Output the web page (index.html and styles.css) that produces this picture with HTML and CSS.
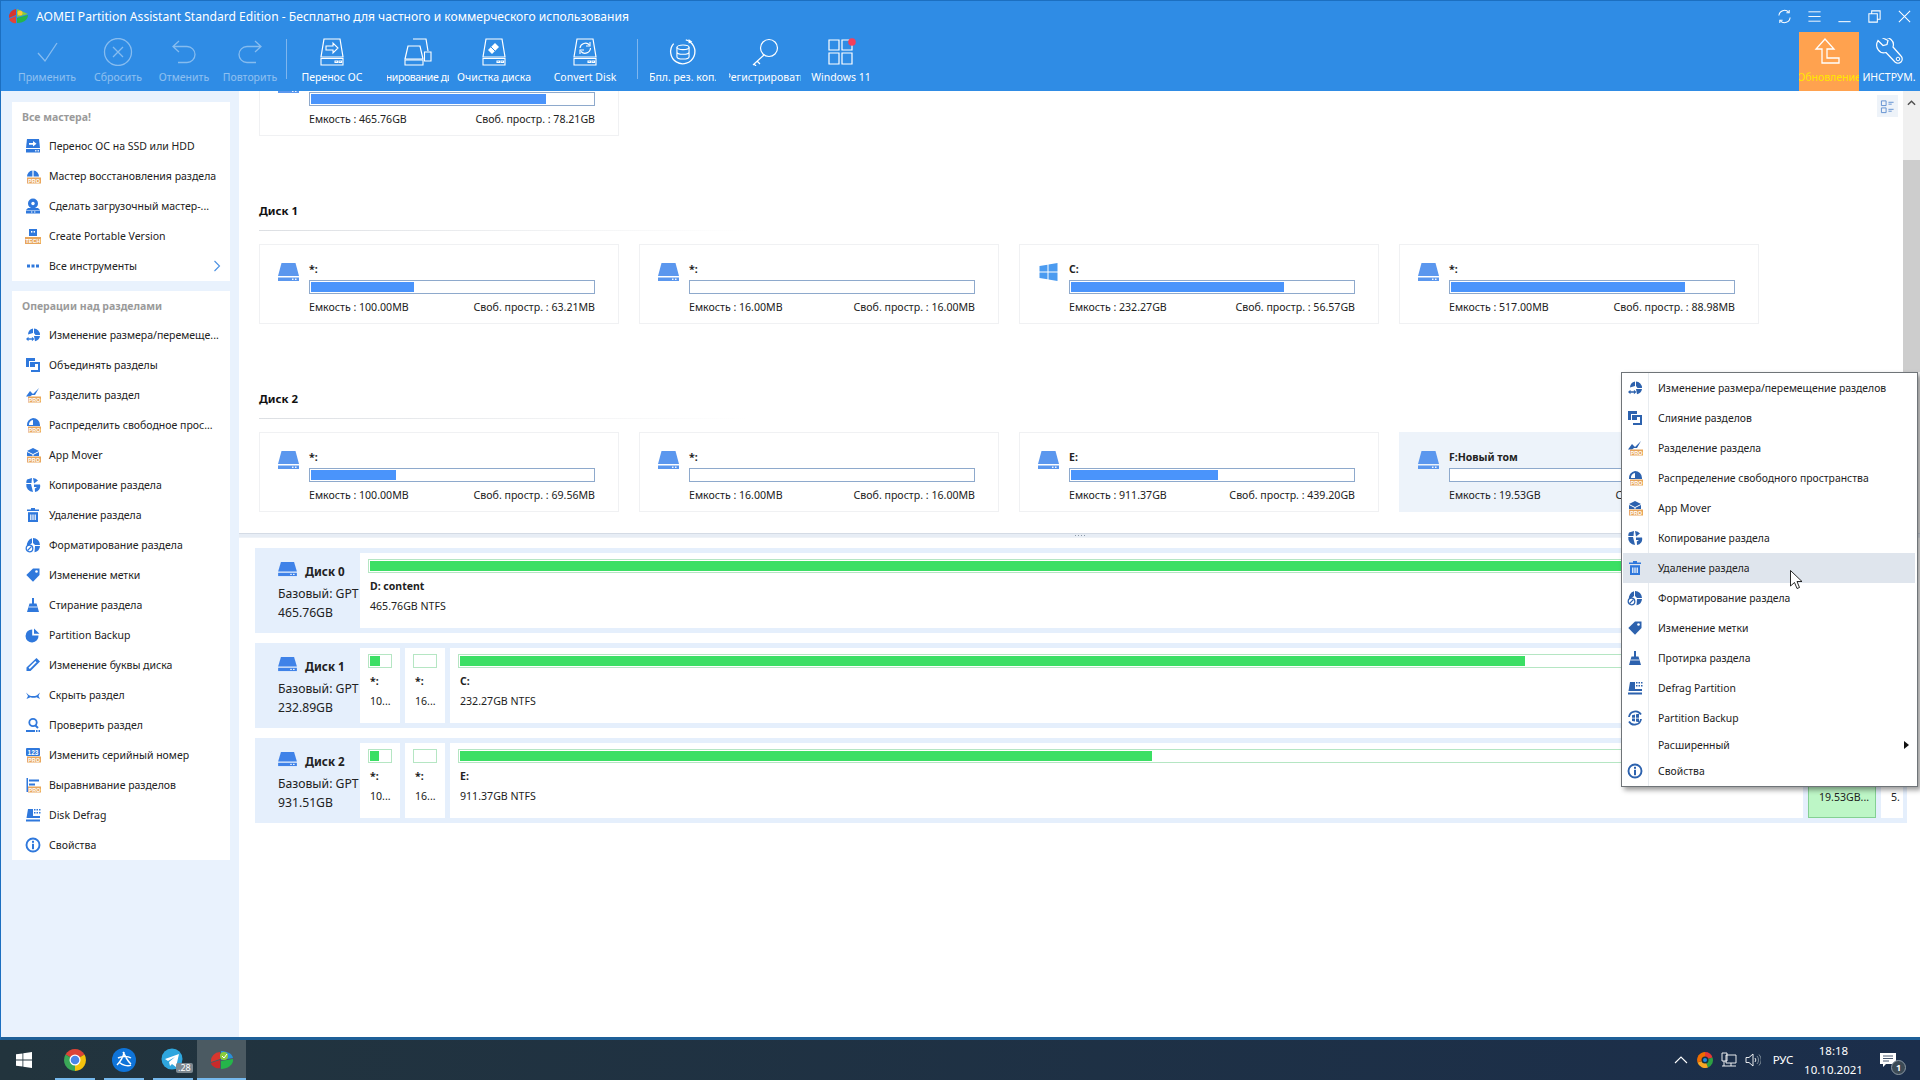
FILE: index.html
```html
<!DOCTYPE html>
<html lang="ru">
<head>
<meta charset="utf-8">
<title>AOMEI Partition Assistant</title>
<link rel="stylesheet" href="styles.css">
</head>
<body>
<svg class="sprite" xmlns="http://www.w3.org/2000/svg">
  <symbol id="drive" viewBox="0 0 21 18"><path d="M3.5 0H17.5L21 13H0Z" fill="#5b97ee"/><rect y="14.5" width="21" height="3.5" fill="#5b97ee"/><rect x="14" y="15.6" width="1.5" height="1.3" fill="#fff"/><rect x="17" y="15.6" width="1.5" height="1.3" fill="#fff"/></symbol>
  <symbol id="drive2" viewBox="0 0 20 16"><path d="M3 0H17L20 10H0Z" fill="#3f82e8"/><rect y="11.5" width="20" height="3.5" fill="#3f82e8"/><rect x="13" y="12.6" width="1.5" height="1.3" fill="#fff"/><rect x="16" y="12.6" width="1.5" height="1.3" fill="#fff"/></symbol>
  <symbol id="win" viewBox="0 0 18 18"><path d="M0 3L8 1.7V8.4H0ZM9 1.5L18 0V8.4H9ZM0 9.6H8V16.3L0 15ZM9 9.6H18V18L9 16.5Z" fill="#4b9bf0"/></symbol>

  <symbol id="i-migrate" viewBox="0 0 16 16"><path d="M2 1H14L15 10H1Z" fill="currentColor"/><path d="M4 5h4V3l3.500 2.800L8 8.600V6.800H4Z" fill="#fff"/><rect x="1" y="11" width="14" height="3.500" fill="currentColor"/><rect x="10" y="12.200" width="1.500" height="1.200" fill="#fff"/><rect x="12.500" y="12.200" width="1.500" height="1.200" fill="#fff"/></symbol>
  <symbol id="i-restore" viewBox="0 0 16 16"><path d="M2 8.500A6 6 0 0 1 7.400 2.500V8.500ZM8.600 2.500A6 6 0 0 1 14 8.500H8.600Z" fill="currentColor"/><rect x="2" y="9.500" width="14" height="6" fill="#e8a65c"/><text x="9" y="14.500" text-anchor="middle" font-family="Liberation Sans" font-size="5.500" font-weight="700" fill="#fff">PRO</text></symbol>
  <symbol id="i-boot" viewBox="0 0 16 16"><circle cx="8" cy="5.500" r="5" fill="currentColor"/><circle cx="8" cy="5.500" r="1.700" fill="#fff"/><path d="M3 10h10l2 2H1Z" fill="currentColor"/><rect x="1" y="12.500" width="14" height="3" fill="currentColor"/><rect x="6" y="13.500" width="1.400" height="1" fill="#fff"/><rect x="9" y="13.500" width="1.400" height="1" fill="#fff"/></symbol>
  <symbol id="i-tech" viewBox="0 0 16 16"><path d="M4 1h8v7H4Z" fill="currentColor"/><rect x="6" y="3" width="1.400" height="1.600" fill="#fff"/><rect x="8.600" y="3" width="1.400" height="1.600" fill="#fff"/><rect y="9" width="16" height="7" fill="#e8a65c"/><text x="8" y="14.600" text-anchor="middle" font-family="Liberation Sans" font-size="5.500" font-weight="700" fill="#fff">TECH</text></symbol>
  <symbol id="i-dots" viewBox="0 0 16 16"><path d="M2 6.500h3v3H2ZM6.500 6.500h3v3h-3ZM11 6.500h3v3h-3Z" fill="currentColor"/></symbol>
  <symbol id="i-resize" viewBox="0 0 16 16"><path d="M3 7.500A6.500 6.500 0 0 1 8 1.500V6ZM9 1.500A6.500 6.500 0 0 1 15 8H10.500L9 6ZM9 9H15A6.500 6.500 0 0 1 10 14.200Z" fill="currentColor"/><path d="M1 12l2.500-2.200v1.400h3.400V9.800L9.400 12l-2.500 2.200v-1.400H3.500v1.400Z" fill="currentColor"/></symbol>
  <symbol id="i-merge" viewBox="0 0 16 16"><path d="M1 1h9v3H4v6H1Z" fill="currentColor"/><path d="M5 5h10v10H6v-2h7V7H5Z" fill="currentColor"/><rect x="5" y="5" width="5" height="5" fill="currentColor"/></symbol>
  <symbol id="i-split" viewBox="0 0 16 16"><path d="M1 9.500L5 4l3 3 6-6-4 7H7L5 9.500Z" fill="currentColor"/><rect x="3" y="9.500" width="13" height="6" fill="#e8a65c"/><text x="9.500" y="14.500" text-anchor="middle" font-family="Liberation Sans" font-size="5.500" font-weight="700" fill="#fff">PRO</text></symbol>
  <symbol id="i-alloc" viewBox="0 0 16 16"><path d="M8 1A7 7 0 0 1 15 8V9H2A7 7 0 0 1 8 1Z" fill="currentColor"/><path d="M8 3V8H4A4.500 4.500 0 0 1 8 3Z" fill="#fff"/><rect x="3" y="9.500" width="13" height="6" fill="#e8a65c"/><text x="9.500" y="14.500" text-anchor="middle" font-family="Liberation Sans" font-size="5.500" font-weight="700" fill="#fff">PRO</text></symbol>
  <symbol id="i-app" viewBox="0 0 16 16"><path d="M8 1l6 3-6 3-6-3Z" fill="currentColor"/><path d="M2 5l5.500 2.800V9H2ZM14 5L8.500 7.800V9H14Z" fill="currentColor"/><rect x="2" y="9.500" width="14" height="6" fill="#e8a65c"/><text x="9" y="14.500" text-anchor="middle" font-family="Liberation Sans" font-size="5.500" font-weight="700" fill="#fff">PRO</text></symbol>
  <symbol id="i-copy" viewBox="0 0 16 16"><path d="M2 2.500L7 1 6.500 6H1.300A7 7 0 0 1 2 2.500ZM8 1a7 7 0 0 1 5 2.500L9 6.500ZM1.300 7H6l2 8A7 7 0 0 1 1.300 7Z" fill="currentColor"/><path d="M9 7.500h6a6 6 0 0 1-5 7.500l-.2-3.500L12 10H9Z" fill="currentColor"/></symbol>
  <symbol id="i-del" viewBox="0 0 16 16"><path d="M6 1h4v1.500h4V4H2V2.500h4Z" fill="currentColor"/><path d="M3 5.200h10V15H3Z" fill="currentColor"/><path d="M5.200 7.500h1.200V13H5.200ZM7.400 7.500h1.200V13H7.400ZM9.600 7.500h1.200V13H9.600Z" fill="#fff"/></symbol>
  <symbol id="i-format" viewBox="0 0 16 16"><path d="M8 1a7 7 0 0 1 7 7H10L8 6ZM7 1.200V6L3.500 9H2A7 7 0 0 1 7 1.200ZM10 9h5a7 7 0 0 1-5.500 6.300Z" fill="currentColor"/><circle cx="4.500" cy="11.500" r="3.300" fill="#fff" stroke="currentColor" stroke-width="1.300"/><path d="M2.500 13.500l4-4" stroke="currentColor" stroke-width="1.100"/></symbol>
  <symbol id="i-tag" viewBox="0 0 16 16"><path d="M8 1.500h6.500V8L8 14.800 1.300 8Z" fill="currentColor"/><circle cx="11.500" cy="4.500" r="1.300" fill="#fff"/></symbol>
  <symbol id="i-wipe" viewBox="0 0 16 16"><path d="M7 1h2v5.500h2.500L14 15H2l2.500-8.500H7Z" fill="currentColor"/><path d="M3.500 10h9" stroke="#fff" stroke-width=".8"/></symbol>
  <symbol id="i-backup" viewBox="0 0 16 16"><path d="M7.200 2.500V8.500H13.500A6.500 6.500 0 1 1 7.200 2.500ZM9 1.500L14.500 6.800H9Z" fill="currentColor"/></symbol>
  <symbol id="i-letter" viewBox="0 0 16 16"><path d="M11.500 1L15 4.500 5.500 14H1.500V10.500Z" fill="currentColor"/><path d="M3.500 10.700l6.800-6.800 1.300 1.300-6.800 6.800Z" fill="#fff"/></symbol>
  <symbol id="i-hide" viewBox="0 0 16 16"><path d="M1 5.500l3 2.700c2.500 1.200 5.500 1.200 8 0l3-2.700-1.500 3.500 1.500 3-3.500-1.800c-2 .7-4 .7-6 0L1.500 12 3 9Z" fill="currentColor"/></symbol>
  <symbol id="i-check" viewBox="0 0 16 16"><circle cx="8" cy="5.500" r="3.700" fill="none" stroke="currentColor" stroke-width="1.800"/><path d="M10.500 8.500l2.500 2.500" stroke="currentColor" stroke-width="2"/><rect x="1" y="13" width="9" height="2" fill="currentColor"/><rect x="11" y="13" width="1.500" height="2" fill="currentColor"/><rect x="13.500" y="13" width="1.500" height="2" fill="currentColor"/></symbol>
  <symbol id="i-serial" viewBox="0 0 16 16"><rect x="1" y="1" width="14" height="8" rx="1" fill="currentColor"/><text x="8" y="7.600" text-anchor="middle" font-family="Liberation Sans" font-size="6.500" font-weight="700" fill="#fff">123</text><rect x="2" y="9.500" width="14" height="6" fill="#e8a65c"/><text x="9" y="14.500" text-anchor="middle" font-family="Liberation Sans" font-size="5.500" font-weight="700" fill="#fff">PRO</text></symbol>
  <symbol id="i-align" viewBox="0 0 16 16"><path d="M1.500 1H3V15H1.500ZM4 2.500H14V4.500H4ZM4 6.500H10V8.500H4Z" fill="currentColor"/><rect x="3" y="9.500" width="13" height="6" fill="#e8a65c"/><text x="9.500" y="14.500" text-anchor="middle" font-family="Liberation Sans" font-size="5.500" font-weight="700" fill="#fff">PRO</text></symbol>
  <symbol id="i-defrag" viewBox="0 0 16 16"><path d="M3 2H8V9H15V11H1.500ZM1 12.500H15V14.500H1Z" fill="currentColor"/><path d="M9 2h1.500v1.500H9ZM11.500 2H13v1.500h-1.500ZM14 2h1.500v1.500H14ZM9 5h1.500v1.500H9ZM11.500 5H13v1.500h-1.500ZM14 5h1.500v1.500H14Z" fill="currentColor"/></symbol>
  <symbol id="i-info" viewBox="0 0 16 16"><circle cx="8" cy="8" r="6.500" fill="none" stroke="currentColor" stroke-width="1.900"/><rect x="7" y="3.800" width="2" height="2" fill="currentColor"/><rect x="7" y="6.800" width="2" height="5.400" fill="currentColor"/></symbol>
  <symbol id="i-backup2" viewBox="0 0 16 16"><path d="M2 7A6.500 6.500 0 0 1 14 4.500M14 9A6.500 6.500 0 0 1 2 11.500" fill="none" stroke="currentColor" stroke-width="1.800"/><path d="M5 5.200l3-.7V7.700H5ZM9 4.300l3-.6V7.700H9ZM5 8.500h3v3l-3-.6ZM9 8.500h3v3.700l-3-.6Z" fill="currentColor"/></symbol>

  <symbol id="t-check" viewBox="0 0 32 28"><path d="M7 15l7 8L26 5" fill="none" stroke="#fff" stroke-width="1.300"/></symbol>
  <symbol id="t-cancel" viewBox="0 0 32 28"><circle cx="16" cy="14" r="13.500" fill="none" stroke="#fff" stroke-width="1.300"/><path d="M11 9l10 10M21 9L11 19" fill="none" stroke="#fff" stroke-width="1.300"/></symbol>
  <symbol id="t-undo" viewBox="0 0 32 28"><path d="M11 3L5 8.500l6 5.500M5 8.500H19a7.800 7.800 0 0 1 0 16H10" fill="none" stroke="#fff" stroke-width="1.300"/></symbol>
  <symbol id="t-redo" viewBox="0 0 32 28"><path d="M21 3l6 5.500-6 5.500M27 8.500H13a7.800 7.800 0 0 0 0 16H22" fill="none" stroke="#fff" stroke-width="1.300"/></symbol>
  <symbol id="t-migrate" viewBox="0 0 32 28"><path d="M8 1H24L27 19H5Z" fill="none" stroke="#fff" stroke-width="1.200"/><path d="M5 20.500H27V27H5ZM19 23h2.500v1.500H19ZM23 23h2.500v1.500H23Z" fill="none" stroke="#fff" stroke-width="1.100"/><path d="M10 8h7V5l5 5-5 5v-3h-7Z" fill="none" stroke="#fff" stroke-width="1.100"/></symbol>
  <symbol id="t-clone" viewBox="0 0 32 28"><path d="M6 8H18L21 21H3Z" fill="none" stroke="#fff" stroke-width="1.200"/><path d="M3 22H21V27H3Z" fill="none" stroke="#fff" stroke-width="1.100"/><path d="M11 1H24L26 13" fill="none" stroke="#fff" stroke-width="1.200"/><path d="M22.500 14H29V23H22.500Z" fill="none" stroke="#fff" stroke-width="1.100"/></symbol>
  <symbol id="t-clean" viewBox="0 0 32 28"><path d="M8 1H24L27 19H5Z" fill="none" stroke="#fff" stroke-width="1.200"/><path d="M5 20.500H27V27H5ZM19 23h2.500v1.500H19ZM23 23h2.500v1.500H23Z" fill="none" stroke="#fff" stroke-width="1.100"/><path d="M17 5l4 4-7 7-4-4Z" fill="#fff"/><path d="M13 9l4 4" stroke="#2f8ce5" stroke-width="1"/></symbol>
  <symbol id="t-convert" viewBox="0 0 32 28"><path d="M8 1H24L27 19H5Z" fill="none" stroke="#fff" stroke-width="1.200"/><path d="M5 20.500H27V27H5ZM19 23h2.500v1.500H19ZM23 23h2.500v1.500H23Z" fill="none" stroke="#fff" stroke-width="1.100"/><path d="M11 10a5.500 5.500 0 0 1 9.500-3M21.500 10a5.500 5.500 0 0 1-9.500 3.500" fill="none" stroke="#fff" stroke-width="1.200"/><path d="M21 4v4h-4M11 16v-4h4" fill="none" stroke="#fff" stroke-width="1.100"/></symbol>
  <symbol id="t-backup" viewBox="0 0 32 30"><path d="M19 2A13 13 0 1 1 6 6" fill="none" stroke="#fff" stroke-width="1.400"/><path d="M22 1l4 3-4 2" fill="#fff"/><ellipse cx="16" cy="10" rx="6.500" ry="2.500" fill="none" stroke="#fff" stroke-width="1.200"/><path d="M9.500 10v10c0 3.300 13 3.300 13 0V10M9.500 15c0 3.300 13 3.300 13 0" fill="none" stroke="#fff" stroke-width="1.200"/></symbol>
  <symbol id="t-key" viewBox="0 0 32 28"><circle cx="20" cy="10" r="8.500" fill="none" stroke="#fff" stroke-width="1.200"/><path d="M15 17L4 27M8 23l3 3M5 26l2 2" fill="none" stroke="#fff" stroke-width="1.200"/></symbol>
  <symbol id="t-win" viewBox="0 0 32 28"><path d="M4 2H14V12H4ZM17 2H27V12H17ZM4 15H14V26H4ZM17 15H27V26H17Z" fill="none" stroke="#fff" stroke-width="1.200"/><circle cx="27" cy="4" r="3.800" fill="#f23f5c"/></symbol>
  <symbol id="t-update" viewBox="0 0 32 28"><path d="M12 1L3 11H9V25H26V20H14V11H21Z" fill="none" stroke="#fff" stroke-width="1.300"/></symbol>
  <symbol id="t-wrench" viewBox="0 0 32 28"><path d="M5 2.500l5 5 4-1 1-4-5-2.500c6-2 12 3 10 9L28 18a4.200 4.200 0 0 1-6 6L13 14.500C7 16.500 1 9.500 5 2.500Z" fill="none" stroke="#fff" stroke-width="1.200"/><circle cx="25" cy="21" r="1.800" fill="none" stroke="#fff" stroke-width="1"/></symbol>
</svg>

<div class="screen">
  <div class="window">
    <header class="header">
      <div class="titlebar">
        <svg class="app-logo" viewBox="0 0 22 16"><path d="M9 1A8 8 0 0 0 2 10L9 7Z" fill="#d8362e"/><path d="M2 11c1 3 5 5 7 4V8Z" fill="#e3433a"/><path d="M10 1l11 5-11 3Z" fill="#8acb3a"/><path d="M10 10l11-3c0 5-5 8-11 8Z" fill="#25b54a"/><circle cx="13" cy="5" r="2.500" fill="#ffc933"/></svg>
        <span class="title-text">AOMEI Partition Assistant Standard Edition - Бесплатно для частного и коммерческого использования</span>
        <div class="win-controls">
          <span class="ctl"><svg viewBox="0 0 16 16"><path d="M2 7a6 6 0 0 1 10.500-3.500M14 9a6 6 0 0 1-10.500 3.500" fill="none" stroke="#fff" stroke-width="1.100"/><path d="M13 1v3h-3M3 15v-3h3" fill="none" stroke="#fff" stroke-width="1.100"/></svg></span>
          <span class="ctl"><svg viewBox="0 0 16 16"><path d="M1.500 3h13M1.500 8h13M1.500 13h13" stroke="#fff" stroke-width="1"/></svg></span>
          <span class="ctl"><svg viewBox="0 0 16 16"><path d="M1.500 13.500h13" stroke="#fff" stroke-width="1.100"/></svg></span>
          <span class="ctl"><svg viewBox="0 0 16 16"><path d="M2 5h9v9H2ZM5 5V2h9v9h-3" fill="none" stroke="#fff" stroke-width="1.100"/></svg></span>
          <span class="ctl"><svg viewBox="0 0 16 16"><path d="M2 2l12 12M14 2L2 14" stroke="#fff" stroke-width="1.100"/></svg></span>
        </div>
      </div>
      <div class="toolbar">
        <div class="tool off w66 m14"><svg class="t-icon"><use href="#t-check"/></svg><span>Применить</span></div>
        <div class="tool off w66 m5"><svg class="t-icon"><use href="#t-cancel"/></svg><span>Сбросить</span></div>
        <div class="tool off w66"><svg class="t-icon"><use href="#t-undo"/></svg><span>Отменить</span></div>
        <div class="tool off w66"><svg class="t-icon"><use href="#t-redo"/></svg><span>Повторить</span></div>
        <div class="tool-sep s1"></div>
        <div class="tool w66"><svg class="t-icon"><use href="#t-migrate"/></svg><span>Перенос ОС</span></div>
        <div class="tool w62 m22 tight"><svg class="t-icon"><use href="#t-clone"/></svg><span>Клонирование диска</span></div>
        <div class="tool w78 m6"><svg class="t-icon"><use href="#t-clean"/></svg><span>Очистка диска</span></div>
        <div class="tool w66 m19"><svg class="t-icon"><use href="#t-convert"/></svg><span>Convert Disk</span></div>
        <div class="tool-sep s2"></div>
        <div class="tool w66"><svg class="t-icon"><use href="#t-backup"/></svg><span>Бпл. рез. коп.</span></div>
        <div class="tool w72 m13"><svg class="t-icon"><use href="#t-key"/></svg><span>Регистрировать</span></div>
        <div class="tool w66 m7"><svg class="t-icon"><use href="#t-win"/></svg><span>Windows 11</span></div>
        <div class="tool-spacer"></div>
        <div class="tool w60 update"><svg class="t-icon"><use href="#t-update"/></svg><span>Обновление</span></div>
        <div class="tool w60 tools-end"><svg class="t-icon"><use href="#t-wrench"/></svg><span>ИНСТРУМ.</span></div>
      </div>
    </header>

    <div class="workspace">
      <aside class="sidebar">
        <section class="side-card">
          <h3 class="side-title">Все мастера!</h3>
          <div class="side-item"><svg class="s-icon"><use href="#i-migrate"/></svg>Перенос ОС на SSD или HDD</div>
          <div class="side-item"><svg class="s-icon"><use href="#i-restore"/></svg>Мастер восстановления раздела</div>
          <div class="side-item"><svg class="s-icon"><use href="#i-boot"/></svg>Сделать загрузочный мастер-...</div>
          <div class="side-item"><svg class="s-icon"><use href="#i-tech"/></svg>Create Portable Version</div>
          <div class="side-item"><svg class="s-icon"><use href="#i-dots"/></svg>Все инструменты<svg class="chev" viewBox="0 0 8 12"><path d="M1.500 1l5 5-5 5" fill="none" stroke="#4a90e2" stroke-width="1.100"/></svg></div>
        </section>
        <section class="side-card">
          <h3 class="side-title">Операции над разделами</h3>
          <div class="side-item"><svg class="s-icon"><use href="#i-resize"/></svg>Изменение размера/перемеще...</div>
          <div class="side-item"><svg class="s-icon"><use href="#i-merge"/></svg>Объединять разделы</div>
          <div class="side-item"><svg class="s-icon"><use href="#i-split"/></svg>Разделить раздел</div>
          <div class="side-item"><svg class="s-icon"><use href="#i-alloc"/></svg>Распределить свободное прос...</div>
          <div class="side-item"><svg class="s-icon"><use href="#i-app"/></svg>App Mover</div>
          <div class="side-item"><svg class="s-icon"><use href="#i-copy"/></svg>Копирование раздела</div>
          <div class="side-item"><svg class="s-icon"><use href="#i-del"/></svg>Удаление раздела</div>
          <div class="side-item"><svg class="s-icon"><use href="#i-format"/></svg>Форматирование раздела</div>
          <div class="side-item"><svg class="s-icon"><use href="#i-tag"/></svg>Изменение метки</div>
          <div class="side-item"><svg class="s-icon"><use href="#i-wipe"/></svg>Стирание раздела</div>
          <div class="side-item"><svg class="s-icon"><use href="#i-backup"/></svg>Partition Backup</div>
          <div class="side-item"><svg class="s-icon"><use href="#i-letter"/></svg>Изменение буквы диска</div>
          <div class="side-item"><svg class="s-icon"><use href="#i-hide"/></svg>Скрыть раздел</div>
          <div class="side-item"><svg class="s-icon"><use href="#i-check"/></svg>Проверить раздел</div>
          <div class="side-item"><svg class="s-icon"><use href="#i-serial"/></svg>Изменить серийный номер</div>
          <div class="side-item"><svg class="s-icon"><use href="#i-align"/></svg>Выравнивание разделов</div>
          <div class="side-item"><svg class="s-icon"><use href="#i-defrag"/></svg>Disk Defrag</div>
          <div class="side-item"><svg class="s-icon"><use href="#i-info"/></svg>Свойства</div>
        </section>
      </aside>

      <main class="main">
        <div class="upper">
          <div class="upper-scroll">
            <div class="disk-group">
              <div class="disk-head">Диск 0</div>
              <div class="card-row">
                <article class="card">
                  <svg class="c-icon"><use href="#drive"/></svg>
                  <div class="c-body"><div class="c-name">D: content</div><div class="c-bar"><i class="fill" style="width:235px"></i></div><div class="c-info"><span>Емкость : 465.76GB</span><span>Своб. простр. : 78.21GB</span></div></div>
                </article>
              </div>
            </div>
            <div class="disk-group">
              <div class="disk-head">Диск 1</div>
              <div class="card-row">
                <article class="card">
                  <svg class="c-icon"><use href="#drive"/></svg>
                  <div class="c-body"><div class="c-name">*:</div><div class="c-bar"><i class="fill" style="width:103px"></i></div><div class="c-info"><span>Емкость : 100.00MB</span><span>Своб. простр. : 63.21MB</span></div></div>
                </article>
                <article class="card">
                  <svg class="c-icon"><use href="#drive"/></svg>
                  <div class="c-body"><div class="c-name">*:</div><div class="c-bar"></div><div class="c-info"><span>Емкость : 16.00MB</span><span>Своб. простр. : 16.00MB</span></div></div>
                </article>
                <article class="card">
                  <svg class="c-icon"><use href="#win"/></svg>
                  <div class="c-body"><div class="c-name">C:</div><div class="c-bar"><i class="fill" style="width:213px"></i></div><div class="c-info"><span>Емкость : 232.27GB</span><span>Своб. простр. : 56.57GB</span></div></div>
                </article>
                <article class="card">
                  <svg class="c-icon"><use href="#drive"/></svg>
                  <div class="c-body"><div class="c-name">*:</div><div class="c-bar"><i class="fill" style="width:234px"></i></div><div class="c-info"><span>Емкость : 517.00MB</span><span>Своб. простр. : 88.98MB</span></div></div>
                </article>
              </div>
            </div>
            <div class="disk-group">
              <div class="disk-head">Диск 2</div>
              <div class="card-row">
                <article class="card">
                  <svg class="c-icon"><use href="#drive"/></svg>
                  <div class="c-body"><div class="c-name">*:</div><div class="c-bar"><i class="fill" style="width:85px"></i></div><div class="c-info"><span>Емкость : 100.00MB</span><span>Своб. простр. : 69.56MB</span></div></div>
                </article>
                <article class="card">
                  <svg class="c-icon"><use href="#drive"/></svg>
                  <div class="c-body"><div class="c-name">*:</div><div class="c-bar"></div><div class="c-info"><span>Емкость : 16.00MB</span><span>Своб. простр. : 16.00MB</span></div></div>
                </article>
                <article class="card">
                  <svg class="c-icon"><use href="#drive"/></svg>
                  <div class="c-body"><div class="c-name">E:</div><div class="c-bar"><i class="fill" style="width:147px"></i></div><div class="c-info"><span>Емкость : 911.37GB</span><span>Своб. простр. : 439.20GB</span></div></div>
                </article>
                <article class="card selected">
                  <svg class="c-icon"><use href="#drive"/></svg>
                  <div class="c-body"><div class="c-name">F:Новый том</div><div class="c-bar"></div><div class="c-info"><span>Емкость : 19.53GB</span><span>Своб. простр. : 19.44GB</span></div></div>
                </article>
              </div>
            </div>
          </div>
          <div class="view-toggle"><svg viewBox="0 0 16 16"><path d="M1.500 2H6.500V7H1.500ZM1.500 9.500H6.500V14.500H1.500Z" fill="none" stroke="#5f8fd0" stroke-width="1"/><path d="M9 3.500h5.500M9 5.500h3.500M9 11h5.500M9 13h3.500" stroke="#5f8fd0" stroke-width="1"/></svg></div>
          <div class="scrollbar">
            <svg class="sb-up" viewBox="0 0 10 6"><path d="M1 5l4-4 4 4" fill="none" stroke="#505050" stroke-width="1.600"/></svg>
            <div class="sb-thumb"></div>
          </div>
        </div>

        <div class="splitter"><i class="grip-dot"></i><i class="grip-dot"></i><i class="grip-dot"></i><i class="grip-dot"></i></div>

        <div class="lower">
          <div class="disk-row">
            <div class="disk-info">
              <div class="disk-name"><svg class="d-icon"><use href="#drive2"/></svg><b>Диск 0</b></div>
              <div>Базовый: GPT</div>
              <div>465.76GB</div>
            </div>
            <div class="parts">
              <div class="part grow"><div class="p-bar"><i class="p-fill full"></i></div><div class="p-name bold">D: content</div><div class="p-size">465.76GB NTFS</div></div>
            </div>
          </div>
          <div class="disk-row">
            <div class="disk-info">
              <div class="disk-name"><svg class="d-icon"><use href="#drive2"/></svg><b>Диск 1</b></div>
              <div>Базовый: GPT</div>
              <div>232.89GB</div>
            </div>
            <div class="parts">
              <div class="part small"><div class="p-bar"><i class="p-fill" style="width:10px"></i></div><div class="p-name bold">*:</div><div class="p-size">10...</div></div>
              <div class="part small"><div class="p-bar"></div><div class="p-name bold">*:</div><div class="p-size">16...</div></div>
              <div class="part grow"><div class="p-bar"><i class="p-fill" style="width:1065px"></i></div><div class="p-name bold">C:</div><div class="p-size">232.27GB NTFS</div></div>
            </div>
          </div>
          <div class="disk-row">
            <div class="disk-info">
              <div class="disk-name"><svg class="d-icon"><use href="#drive2"/></svg><b>Диск 2</b></div>
              <div>Базовый: GPT</div>
              <div>931.51GB</div>
            </div>
            <div class="parts">
              <div class="part small"><div class="p-bar"><i class="p-fill" style="width:9px"></i></div><div class="p-name bold">*:</div><div class="p-size">10...</div></div>
              <div class="part small"><div class="p-bar"></div><div class="p-name bold">*:</div><div class="p-size">16...</div></div>
              <div class="part grow"><div class="p-bar"><i class="p-fill" style="width:692px"></i></div><div class="p-name bold">E:</div><div class="p-size">911.37GB NTFS</div></div>
              <div class="part active"><div class="p-size">19.53GB...</div></div>
              <div class="part last"><div class="p-size">5.</div></div>
            </div>
          </div>
        </div>
      </main>
    </div>
  </div>

  <footer class="taskbar">
    <div class="start"><svg viewBox="0 0 16 16"><path d="M0 2.300L6.500 1.400V7.600H0ZM7.300 1.300L16 0V7.600H7.300ZM0 8.400H6.500V14.600L0 13.700ZM7.300 8.400H16V16L7.300 14.700Z" fill="#fff"/></svg></div>
    <div class="app"><svg viewBox="0 0 24 24"><path d="M12 12L2.500 6.500A11 11 0 0 1 21.500 6.500Z" fill="#db4437"/><path d="M12 12L21.500 6.500A11 11 0 0 1 12 23Z" fill="#f4c20d"/><path d="M12 12L12 23A11 11 0 0 1 2.500 6.500Z" fill="#3aa757"/><circle cx="12" cy="12" r="5.500" fill="#fff"/><circle cx="12" cy="12" r="4.300" fill="#4a86e8"/></svg></div>
    <div class="app"><svg viewBox="0 0 24 24"><circle cx="12" cy="12" r="12" fill="#0f74d9"/><path d="M11 4c2 3 4 9 8 12M6 10c4-2 10-2 13 0M5 17c3-3 7-9 7-13M7 14c3 3 9 5 12 3" fill="none" stroke="#fff" stroke-width="1.500"/></svg></div>
    <div class="app"><svg viewBox="0 0 24 24"><circle cx="11" cy="11" r="10.500" fill="#2ea6de"/><path d="M4 11l14-5-3 13-4-3-2 2-1-4 6-5-7 4Z" fill="#fff"/></svg><span class="tg-badge">.28</span></div>
    <div class="app current"><svg viewBox="0 0 24 20"><path d="M10 2A9 9 0 0 0 1 12L10 9Z" fill="#d8362e"/><path d="M1 13c1 4 6 6 9 5V10Z" fill="#c92a2a"/><path d="M11 1c5 0 11 2 12 7l-12 2Z" fill="#2a8fd8"/><path d="M11 11l12-2c1 6-6 10-12 10Z" fill="#25b54a"/><circle cx="14" cy="6" r="4" fill="#8acb3a"/><path d="M12 6l2 2 3-4" fill="none" stroke="#fff" stroke-width="1"/></svg></div>
    <div class="task-spacer"></div>
    <div class="tray-icon"><svg viewBox="0 0 16 16"><path d="M2 11l6-6 6 6" fill="none" stroke="#fff" stroke-width="1.100"/></svg></div>
    <div class="tray-icon"><svg viewBox="0 0 16 16"><path d="M8 0A8 8 0 0 1 15.500 5.500L8 8Z" fill="#e53935"/><path d="M15.500 5.500A8 8 0 0 1 11 15.500L8 8Z" fill="#2ea043"/><path d="M11 15.500A8 8 0 0 1 .5 10.500L8 8Z" fill="#f9a825"/><path d="M.5 10.500A8 8 0 0 1 8 0V8Z" fill="#ef6c00"/><circle cx="8" cy="8" r="3.500" fill="#1a2f3c"/><circle cx="8" cy="8" r="2" fill="#1e88e5"/></svg></div>
    <div class="tray-icon"><svg viewBox="0 0 16 16"><path d="M5 3h10v8H5ZM1 1h5v8H1ZM3 9v5M1 14h14M10 11v3" fill="none" stroke="#fff" stroke-width=".9"/></svg></div>
    <div class="tray-icon"><svg viewBox="0 0 16 16"><path d="M1 5.500h3L8 2v12L4 10.500H1Z" fill="none" stroke="#fff" stroke-width=".9"/><path d="M10 6a3 3 0 0 1 0 4" fill="none" stroke="#fff" stroke-width=".9"/><path d="M12 4a6 6 0 0 1 0 8M14 2.500a8 8 0 0 1 0 11" fill="none" stroke="#8a97a3" stroke-width=".9"/></svg></div>
    <div class="tray-lang">РУС</div>
    <div class="clock"><span>18:18</span><span>10.10.2021</span></div>
    <div class="notify"><svg viewBox="0 0 16 14"><path d="M0 0H16V11H6L3 14V11H0Z" fill="#fff"/><path d="M3 3H13M3 5.500H13M3 8H9" stroke="#1b2e4b" stroke-width=".8"/></svg><span class="notify-badge">1</span></div>
  </footer>

  <nav class="ctx-menu">
    <div class="ctx-item"><svg class="m-icon"><use href="#i-resize"/></svg><span>Изменение размера/перемещение разделов</span></div>
    <div class="ctx-item"><svg class="m-icon"><use href="#i-merge"/></svg><span>Слияние разделов</span></div>
    <div class="ctx-item"><svg class="m-icon"><use href="#i-split"/></svg><span>Разделение раздела</span></div>
    <div class="ctx-item"><svg class="m-icon"><use href="#i-alloc"/></svg><span>Распределение свободного пространства</span></div>
    <div class="ctx-item"><svg class="m-icon"><use href="#i-app"/></svg><span>App Mover</span></div>
    <div class="ctx-item"><svg class="m-icon"><use href="#i-copy"/></svg><span>Копирование раздела</span></div>
    <div class="ctx-item hot"><svg class="m-icon hot-icon"><use href="#i-del"/></svg><span>Удаление раздела</span></div>
    <div class="ctx-item"><svg class="m-icon"><use href="#i-format"/></svg><span>Форматирование раздела</span></div>
    <div class="ctx-item"><svg class="m-icon"><use href="#i-tag"/></svg><span>Изменение метки</span></div>
    <div class="ctx-item"><svg class="m-icon"><use href="#i-wipe"/></svg><span>Протирка раздела</span></div>
    <div class="ctx-item"><svg class="m-icon"><use href="#i-defrag"/></svg><span>Defrag Partition</span></div>
    <div class="ctx-item"><svg class="m-icon"><use href="#i-backup2"/></svg><span>Partition Backup</span></div>
    <div class="ctx-item short"><i class="m-blank"></i><span>Расширенный</span><svg class="m-arrow" viewBox="0 0 5 8"><path d="M0 0l5 4-5 4Z" fill="#111"/></svg></div>
    <div class="ctx-item shortish"><svg class="m-icon"><use href="#i-info"/></svg><span>Свойства</span></div>
  </nav>

  <svg class="cursor" viewBox="0 0 12 19"><path d="M.5.500V16l4-3.500 2.500 6 2.500-1-2.500-6H12Z" fill="#fff" stroke="#111" stroke-width=".9"/></svg>
</div>
</body>
</html>
```

FILE: styles.css
```css
* { box-sizing: border-box; }
html, body { margin: 0; padding: 0; }
body { width: 1920px; height: 1080px; overflow: hidden; font-family: "Noto Sans", "Liberation Sans", sans-serif; font-size: 10.5px; color: #1d1d1d; background: #fff; }
.sprite { display: none; }
svg { display: block; flex-shrink: 0; }
.screen { position: relative; width: 1920px; height: 1080px; display: flex; flex-direction: column; overflow: hidden; }
.window { height: 1040px; display: flex; flex-direction: column; border-bottom: 3px solid #1e5f97; border-left: 1px solid #1c6fc0; }

/* header */
.header { height: 91px; background: #2f8ce5; border-top: 1px solid #1c6fc0; color: #fff; flex-shrink: 0; }
.titlebar { height: 30px; display: flex; align-items: center; }
.app-logo { width: 22px; height: 16px; margin-left: 6px; }
.title-text { margin-left: 7px; font-size: 12.1px; white-space: nowrap; }
.win-controls { margin-left: auto; display: flex; padding-right: 1px; }
.ctl { width: 30px; height: 30px; display: flex; align-items: center; justify-content: center; }
.ctl svg { width: 15px; height: 15px; }
.toolbar { height: 60px; display: flex; }
.tool { display: flex; flex-direction: column; align-items: center; padding-top: 7px; overflow: hidden; white-space: nowrap; flex-shrink: 0; }
.tool span { display: block; margin-top: 4px; line-height: 14px; font-size: 10.5px; }
.tight span { letter-spacing: -.4px; }
.t-icon { width: 32px; height: 28px; }
.off .t-icon { opacity: .42; }
.off span { opacity: .45; }
.w60 { width: 60px; } .w62 { width: 62px; } .w66 { width: 66px; } .w72 { width: 72px; } .w78 { width: 78px; }
.m14 { margin-left: 13px; } .m5 { margin-left: 5px; } .m22 { margin-left: 22px; } .m6 { margin-left: 6px; } .m19 { margin-left: 19px; } .m13 { margin-left: 13px; } .m7 { margin-left: 7px; }
.tool-sep { width: 1px; height: 40px; margin-top: 8px; background: #7fb6ee; flex-shrink: 0; }
.s1 { margin-left: 3px; margin-right: 12px; }
.s2 { margin-left: 19px; margin-right: 12px; }
.tool-spacer { flex: 1; }
.update { background: #ffa24f; color: #ffe600; margin-top: 1px; padding-top: 6px; }
.tools-end { margin-right: 1px; }

/* workspace */
.workspace { flex: 1; display: flex; min-height: 0; }
.sidebar { width: 238px; background: #e9f2fd; padding: 11px 8px 0 11px; flex-shrink: 0; display: flex; flex-direction: column; gap: 10px; }
.side-card { background: #fff; width: 218px; }
.side-title { margin: 0; height: 29px; line-height: 30px; padding-left: 10px; font-size: 10.5px; font-weight: 700; color: #9a9a9a; }
.side-item { height: 30px; display: flex; align-items: center; padding: 0 0 0 13px; white-space: nowrap; font-size: 10.5px; color: #222; }
.s-icon { width: 16px; height: 16px; margin-right: 8px; color: #2f78dc; }
.chev { width: 8px; height: 12px; margin-left: auto; margin-right: 9px; }

/* main */
.main { flex: 1; display: flex; flex-direction: column; min-width: 0; }
.upper { position: relative; height: 442px; display: flex; flex-shrink: 0; }
.upper-scroll { flex: 1; padding-left: 20px; overflow: hidden; min-width: 0; }
.disk-group { height: 188px; }
.disk-group:first-child { margin-top: -80px; }
.disk-head { height: 45px; padding-top: 1px; line-height: 22px; font-size: 11.4px; font-weight: 700; color: #111; background: linear-gradient(90deg, #dcdfe3, #ffffff 490px) no-repeat 0 31px / 100% 1px; }
.card-row { display: flex; gap: 20px; }
.card { width: 360px; height: 80px; flex-shrink: 0; border: 1px solid #f0f1f3; background: #fff; display: flex; padding: 18px 23px 0 18px; }
.card.selected { background: #edf3fa; border-color: #edf3fa; }
.c-icon { width: 21px; height: 18px; margin-right: 10px; }
.c-body { flex: 1; min-width: 0; }
.c-name { height: 17px; line-height: 12px; font-size: 10.5px; font-weight: 700; color: #222; }
.c-bar { height: 14px; border: 1px solid #8ea9cc; background: #fff; padding: 1px; }
.fill { display: block; height: 100%; background: #4a94fb; }
.c-info { display: flex; justify-content: space-between; margin-top: 6px; line-height: 15px; font-size: 10.6px; white-space: nowrap; color: #222; }
.view-toggle { position: absolute; right: 22px; top: 4px; width: 21px; height: 22px; background: #eef3f9; display: flex; align-items: center; justify-content: center; }
.view-toggle svg { width: 15px; height: 15px; }
.scrollbar { width: 17px; background: #f0f0f0; flex-shrink: 0; padding-top: 9px; }
.sb-up { width: 9px; height: 6px; margin: 0 auto; }
.sb-thumb { height: 212px; margin-top: 54px; background: #cdcdcd; }
.splitter { height: 5px; background: #e7edf5; border-top: 1px solid #d4dbe5; border-bottom: 1px solid #eef2f7; display: flex; justify-content: center; align-items: center; gap: 2px; flex-shrink: 0; }
.grip-dot { width: 1px; height: 1px; background: #8c9aa8; display: block; }
.lower { flex: 1; padding: 10px 13px 0 16px; display: flex; flex-direction: column; gap: 10px; }
.disk-row { height: 85px; display: flex; background: #e5effc; padding: 5px 4px 5px 0; flex-shrink: 0; }
.disk-info { width: 105px; padding: 6px 0 0 23px; font-size: 12.2px; line-height: 19px; white-space: nowrap; color: #222; flex-shrink: 0; }
.disk-name { display: flex; align-items: center; height: 21px; margin-bottom: 4px; }
.disk-name b { font-size: 11.6px; font-weight: 700; color: #222; padding-top: 4px; }
.d-icon { width: 19px; height: 15px; margin-right: 8px; }
.parts { flex: 1; display: flex; gap: 5px; min-width: 0; }
.part { background: #fff; padding: 6px 8px 0; flex-shrink: 0; overflow: hidden; white-space: nowrap; }
.part.grow { flex: 1; min-width: 0; }
.part.small { width: 40px; }
.part.last { width: 22px; padding: 47px 0 0 10px; }
.part.active { width: 68px; padding: 47px 0 0 10px; background: #bdf6c6; border: 1px solid #84d093; border-top: 0; }
.p-bar { height: 14px; border: 1px solid #b5e6c3; padding: 1px; background: #fff; }
.p-fill { display: block; height: 100%; background: #3bdf64; }
.p-fill.full { width: 100%; }
.p-name { margin: 4px 0 0 2px; height: 18px; line-height: 18px; font-size: 10.5px; color: #222; }
.bold { font-weight: 700; }
.p-size { margin: 4px 0 0 2px; line-height: 15px; font-size: 10.6px; color: #222; }
.part.last .p-size, .part.active .p-size { margin: 0; }

/* context menu */
.ctx-menu { position: absolute; left: 1621px; top: 372px; width: 297px; background: #fff; border: 1px solid #6f7478; box-shadow: 3px 3px 5px rgba(0,0,0,.4); padding-bottom: 1px; background-image: linear-gradient(#e8ecf0, #e8ecf0); background-size: 1px 100%; background-position: 26px 0; background-repeat: no-repeat; }
.ctx-item { height: 30px; display: flex; align-items: center; padding: 0 0 0 5px; font-size: 10.4px; white-space: nowrap; color: #222; }
.ctx-item.short { height: 24px; }
.ctx-item.shortish { height: 28px; }
.ctx-item.hot { background: #dfe5ed; margin: 0 2px 0 1px; padding-left: 4px; }
.m-icon { width: 16px; height: 16px; color: #2d62ae; }
.hot-icon { color: #2f78dc; }
.m-blank { width: 16px; height: 16px; display: block; }
.ctx-item span { margin-left: 15px; }
.m-arrow { width: 5px; height: 8px; margin-left: auto; margin-right: 8px; }
.cursor { position: absolute; left: 1790px; top: 570px; width: 12px; height: 19px; }

/* taskbar */
.taskbar { height: 40px; display: flex; background: linear-gradient(90deg, #22343d, #1b2e4b); color: #fff; font-size: 12px; flex-shrink: 0; }
.start { width: 50px; display: flex; align-items: center; padding-left: 16px; }
.start svg { width: 16px; height: 16px; }
.app { position: relative; width: 49px; display: flex; align-items: center; justify-content: center; }
.app svg { width: 24px; height: 24px; }
.app::after { content: ""; position: absolute; left: 5px; right: 4px; bottom: 0; height: 2px; background: #76b9ed; }
.app.current { background: #4b5a62; }
.app.current::after { left: 0; right: 0; }
.tg-badge { position: absolute; left: 28px; top: 23px; background: #7d8890; color: #fff; font-size: 9px; line-height: 10px; padding: 0 2px; border-radius: 2px; }
.task-spacer { flex: 1; }
.tray-icon { width: 24px; display: flex; align-items: center; justify-content: center; }
.tray-icon svg { width: 16px; height: 16px; }
.tray-lang { width: 36px; text-align: center; line-height: 40px; font-size: 11.5px; }
.clock { width: 65px; display: flex; flex-direction: column; align-items: center; justify-content: center; line-height: 19px; font-size: 11.5px; }
.notify { position: relative; width: 44px; margin-right: 10px; display: flex; align-items: center; justify-content: center; }
.notify svg { width: 16px; height: 14px; }
.notify-badge { position: absolute; left: 25px; top: 20px; width: 15px; height: 15px; border-radius: 50%; background: #3c4a55; border: 1px solid #8a97a3; font-size: 9px; line-height: 13px; text-align: center; font-weight: 700; }
```
